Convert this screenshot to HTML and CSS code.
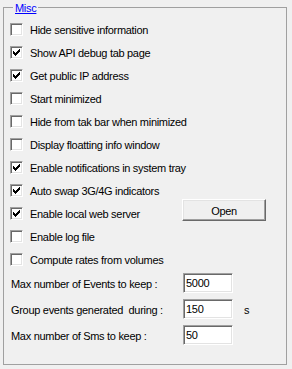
FILE: index.html
```html
<!DOCTYPE html>
<html>
<head>
<meta charset="utf-8">
<link rel="stylesheet" href="styles.css">
</head>
<body>
<div class="group">
  <span class="legend">Misc</span>
  <div class="checks">
    <div class="row"><span class="cb"></span><span class="txt">Hide sensitive information</span></div>
    <div class="row"><span class="cb on"></span><span class="txt">Show API debug tab page</span></div>
    <div class="row"><span class="cb on"></span><span class="txt">Get public IP address</span></div>
    <div class="row"><span class="cb"></span><span class="txt">Start minimized</span></div>
    <div class="row"><span class="cb"></span><span class="txt">Hide from tak bar when minimized</span></div>
    <div class="row"><span class="cb"></span><span class="txt">Display floatting info window</span></div>
    <div class="row"><span class="cb on"></span><span class="txt">Enable notifications in system tray</span></div>
    <div class="row"><span class="cb on"></span><span class="txt">Auto swap 3G/4G indicators</span></div>
    <div class="row"><span class="cb on"></span><span class="txt wide">Enable local web server</span><span class="btn">Open</span></div>
    <div class="row"><span class="cb"></span><span class="txt">Enable log file</span></div>
    <div class="row"><span class="cb"></span><span class="txt">Compute rates from volumes</span></div>
  </div>
  <div class="fields">
    <div class="field"><span class="flabel">Max number of Events to keep :</span><span class="input">5000</span></div>
    <div class="field"><span class="flabel">Group events generated&nbsp; during :</span><span class="input">150</span><span class="unit">s</span></div>
    <div class="field"><span class="flabel">Max number of Sms to keep :</span><span class="input">50</span></div>
  </div>
</div>
</body>
</html>
```
FILE: styles.css
```css
html, body {
  margin: 0;
  padding: 0;
}
body {
  width: 292px;
  height: 369px;
  background: #f0f0f0;
  font-family: "Liberation Sans", Arial, sans-serif;
  font-size: 11px;
  letter-spacing: -0.3px;
  color: #000;
  overflow: hidden;
}
.group {
  position: relative;
  box-sizing: border-box;
  margin: 7px 0 0 3px;
  width: 284px;
  height: 358px;
  border: 1px solid #a0a0a0;
  padding: 10px 0 0 6px;
}
.legend {
  position: absolute;
  top: -6px;
  left: 9px;
  padding: 0 2px;
  line-height: 13px;
  background: #f0f0f0;
  color: #0000ff;
  text-decoration: underline;
}
.checks {
  display: flex;
  flex-direction: column;
}
.row {
  display: flex;
  align-items: center;
  height: 23px;
}
.cb {
  box-sizing: border-box;
  width: 13px;
  height: 13px;
  flex: none;
  margin-right: 7px;
  background: #fff;
  border-top: 1px solid #a0a0a0;
  border-left: 1px solid #a0a0a0;
  border-right: 1px solid #fff;
  border-bottom: 1px solid #fff;
  box-shadow: inset 1px 1px 0 #696969, inset -1px -1px 0 #e3e3e3;
  position: relative;
}
.cb.on::after {
  content: "";
  position: absolute;
  left: 2px;
  top: 2px;
  width: 7px;
  height: 7px;
  background:
    linear-gradient(#000, #000) 0 2px / 1px 3px no-repeat,
    linear-gradient(#000, #000) 1px 3px / 1px 3px no-repeat,
    linear-gradient(#000, #000) 2px 4px / 1px 3px no-repeat,
    linear-gradient(#000, #000) 3px 3px / 1px 3px no-repeat,
    linear-gradient(#000, #000) 4px 2px / 1px 3px no-repeat,
    linear-gradient(#000, #000) 5px 1px / 1px 3px no-repeat,
    linear-gradient(#000, #000) 6px 0 / 1px 3px no-repeat;
}
.txt {
  line-height: 13px;
  padding-top: 2px;
  white-space: nowrap;
}
.txt.wide {
  width: 152px;
}
.btn {
  box-sizing: border-box;
  width: 84px;
  height: 22px;
  margin-bottom: 7px;
  display: flex;
  align-items: center;
  justify-content: center;
  background: #f0f0f0;
  border-top: 1px solid #fff;
  border-left: 1px solid #fff;
  border-right: 1px solid #696969;
  border-bottom: 1px solid #696969;
  box-shadow: inset -1px -1px 0 #a0a0a0, inset 1px 1px 0 #e3e3e3;
  padding-top: 1px;
}
.fields {
  display: flex;
  flex-direction: column;
  margin-top: -1px;
  padding-left: 1px;
}
.field {
  display: flex;
  align-items: center;
  height: 26px;
}
.flabel {
  width: 172px;
  flex: none;
  white-space: nowrap;
  line-height: 13px;
  padding-top: 2px;
}
.input {
  box-sizing: border-box;
  width: 50px;
  height: 20px;
  flex: none;
  background: #fff;
  border-top: 1px solid #a0a0a0;
  border-left: 1px solid #a0a0a0;
  border-right: 1px solid #fff;
  border-bottom: 1px solid #fff;
  box-shadow: inset 1px 1px 0 #696969, inset -1px -1px 0 #e3e3e3;
  padding: 3px 0 0 2px;
  line-height: 13px;
}
.unit {
  margin-left: 11px;
  padding-top: 2px;
}
```
